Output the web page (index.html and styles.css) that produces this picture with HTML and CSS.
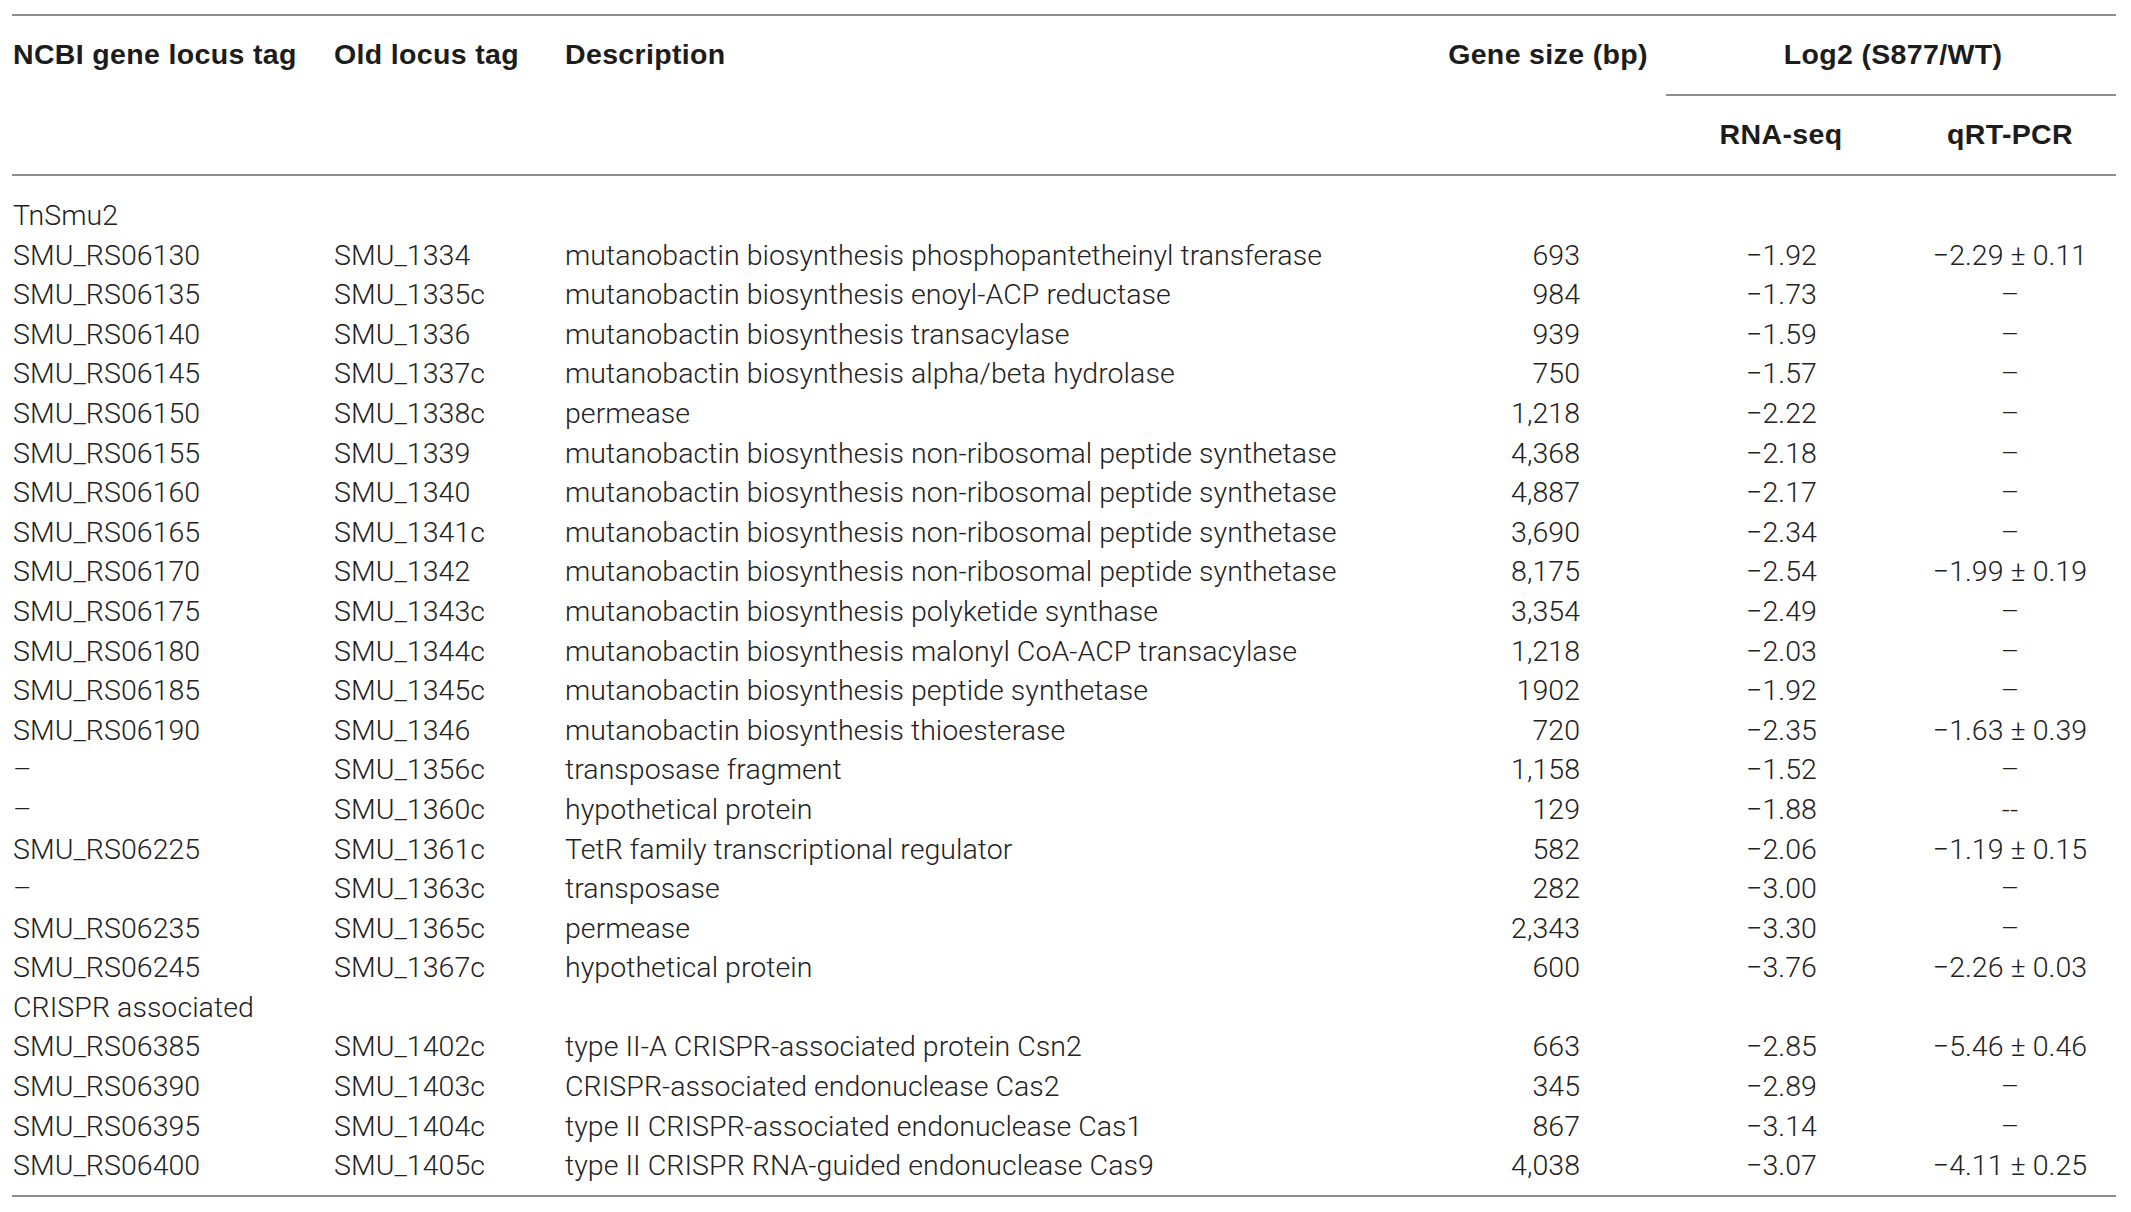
FILE: index.html
```html
<!DOCTYPE html>
<html lang="en">
<head>
<meta charset="utf-8">
<title>Table</title>
<link rel="stylesheet" href="styles.css">
</head>
<body>
<table class="tbl">
  <colgroup>
    <col class="c-ncbi">
    <col class="c-old">
    <col class="c-desc">
    <col class="c-size">
    <col class="c-rna">
    <col class="c-qrt">
  </colgroup>
  <thead>
    <tr class="head-top">
      <th rowspan="2" class="h-left">NCBI gene locus tag</th>
      <th rowspan="2" class="h-left">Old locus tag</th>
      <th rowspan="2" class="h-left">Description</th>
      <th rowspan="2" class="h-center">Gene size (bp)</th>
      <th colspan="2" class="h-group">Log2 (S877/WT)</th>
    </tr>
    <tr class="head-sub">
      <th class="h-sub">RNA-seq</th>
      <th class="h-sub h-qrt">qRT-PCR</th>
    </tr>
  </thead>
  <tbody>
    <tr class="section first"><td colspan="6">TnSmu2</td></tr>
    <tr><td>SMU_RS06130</td><td>SMU_1334</td><td>mutanobactin biosynthesis phosphopantetheinyl transferase</td><td class="num">693</td><td class="ctr">−1.92</td><td class="ctr qrt">−2.29 ± 0.11</td></tr>
    <tr><td>SMU_RS06135</td><td>SMU_1335c</td><td>mutanobactin biosynthesis enoyl-ACP reductase</td><td class="num">984</td><td class="ctr">−1.73</td><td class="ctr qrt">–</td></tr>
    <tr><td>SMU_RS06140</td><td>SMU_1336</td><td>mutanobactin biosynthesis transacylase</td><td class="num">939</td><td class="ctr">−1.59</td><td class="ctr qrt">–</td></tr>
    <tr><td>SMU_RS06145</td><td>SMU_1337c</td><td>mutanobactin biosynthesis alpha/beta hydrolase</td><td class="num">750</td><td class="ctr">−1.57</td><td class="ctr qrt">–</td></tr>
    <tr><td>SMU_RS06150</td><td>SMU_1338c</td><td>permease</td><td class="num">1,218</td><td class="ctr">−2.22</td><td class="ctr qrt">–</td></tr>
    <tr><td>SMU_RS06155</td><td>SMU_1339</td><td>mutanobactin biosynthesis non-ribosomal peptide synthetase</td><td class="num">4,368</td><td class="ctr">−2.18</td><td class="ctr qrt">–</td></tr>
    <tr><td>SMU_RS06160</td><td>SMU_1340</td><td>mutanobactin biosynthesis non-ribosomal peptide synthetase</td><td class="num">4,887</td><td class="ctr">−2.17</td><td class="ctr qrt">–</td></tr>
    <tr><td>SMU_RS06165</td><td>SMU_1341c</td><td>mutanobactin biosynthesis non-ribosomal peptide synthetase</td><td class="num">3,690</td><td class="ctr">−2.34</td><td class="ctr qrt">–</td></tr>
    <tr><td>SMU_RS06170</td><td>SMU_1342</td><td>mutanobactin biosynthesis non-ribosomal peptide synthetase</td><td class="num">8,175</td><td class="ctr">−2.54</td><td class="ctr qrt">−1.99 ± 0.19</td></tr>
    <tr><td>SMU_RS06175</td><td>SMU_1343c</td><td>mutanobactin biosynthesis polyketide synthase</td><td class="num">3,354</td><td class="ctr">−2.49</td><td class="ctr qrt">–</td></tr>
    <tr><td>SMU_RS06180</td><td>SMU_1344c</td><td>mutanobactin biosynthesis malonyl CoA-ACP transacylase</td><td class="num">1,218</td><td class="ctr">−2.03</td><td class="ctr qrt">–</td></tr>
    <tr><td>SMU_RS06185</td><td>SMU_1345c</td><td>mutanobactin biosynthesis peptide synthetase</td><td class="num">1902</td><td class="ctr">−1.92</td><td class="ctr qrt">–</td></tr>
    <tr><td>SMU_RS06190</td><td>SMU_1346</td><td>mutanobactin biosynthesis thioesterase</td><td class="num">720</td><td class="ctr">−2.35</td><td class="ctr qrt">−1.63 ± 0.39</td></tr>
    <tr><td>–</td><td>SMU_1356c</td><td>transposase fragment</td><td class="num">1,158</td><td class="ctr">−1.52</td><td class="ctr qrt">–</td></tr>
    <tr><td>–</td><td>SMU_1360c</td><td>hypothetical protein</td><td class="num">129</td><td class="ctr">−1.88</td><td class="ctr qrt">--</td></tr>
    <tr><td>SMU_RS06225</td><td>SMU_1361c</td><td>TetR family transcriptional regulator</td><td class="num">582</td><td class="ctr">−2.06</td><td class="ctr qrt">−1.19 ± 0.15</td></tr>
    <tr><td>–</td><td>SMU_1363c</td><td>transposase</td><td class="num">282</td><td class="ctr">−3.00</td><td class="ctr qrt">–</td></tr>
    <tr><td>SMU_RS06235</td><td>SMU_1365c</td><td>permease</td><td class="num">2,343</td><td class="ctr">−3.30</td><td class="ctr qrt">–</td></tr>
    <tr><td>SMU_RS06245</td><td>SMU_1367c</td><td>hypothetical protein</td><td class="num">600</td><td class="ctr">−3.76</td><td class="ctr qrt">−2.26 ± 0.03</td></tr>
    <tr class="section"><td colspan="6">CRISPR associated</td></tr>
    <tr><td>SMU_RS06385</td><td>SMU_1402c</td><td>type II-A CRISPR-associated protein Csn2</td><td class="num">663</td><td class="ctr">−2.85</td><td class="ctr qrt">−5.46 ± 0.46</td></tr>
    <tr><td>SMU_RS06390</td><td>SMU_1403c</td><td>CRISPR-associated endonuclease Cas2</td><td class="num">345</td><td class="ctr">−2.89</td><td class="ctr qrt">–</td></tr>
    <tr><td>SMU_RS06395</td><td>SMU_1404c</td><td>type II CRISPR-associated endonuclease Cas1</td><td class="num">867</td><td class="ctr">−3.14</td><td class="ctr qrt">–</td></tr>
    <tr class="last"><td>SMU_RS06400</td><td>SMU_1405c</td><td>type II CRISPR RNA-guided endonuclease Cas9</td><td class="num">4,038</td><td class="ctr">−3.07</td><td class="ctr qrt">−4.11 ± 0.25</td></tr>
  </tbody>
</table>
</body>
</html>
```
FILE: styles.css
```css
html, body {
  margin: 0;
  padding: 0;
  background: #ffffff;
}

.tbl {
  margin: 14px 0 0 12px;
  width: 2104px;
  table-layout: fixed;
  border-collapse: collapse;
  font-family: Roboto, "Liberation Sans", Arial, sans-serif;
  font-weight: 300;
  font-size: 28.5px;
  letter-spacing: 0.05px;
  line-height: 39.6px;
  color: #222222;
}

.c-ncbi { width: 321px; }
.c-old { width: 231px; }
.c-desc { width: 866px; }
.c-size { width: 236px; }
.c-rna { width: 230px; }
.c-qrt { width: 220px; }

.tbl th {
  font-family: "Liberation Sans", Arial, sans-serif;
  font-weight: 700;
  font-size: 28.5px;
  letter-spacing: 0.35px;
  line-height: 40px;
  color: #1c1c1c;
  padding: 0;
  white-space: nowrap;
}

.tbl .head-top th {
  border-top: 2px solid #8e8e8e;
  padding-top: 18px;
  padding-bottom: 20px;
  vertical-align: top;
}

.tbl .h-left {
  text-align: left;
  padding-left: 1px;
  border-bottom: 2px solid #8e8e8e;
}

.tbl .h-center {
  text-align: center;
  border-bottom: 2px solid #8e8e8e;
}

.tbl .h-group {
  text-align: center;
  padding-left: 4px;
  border-bottom: 2px solid #8e8e8e;
}

.tbl .h-sub {
  text-align: center;
  vertical-align: top;
  padding-top: 18px;
  padding-bottom: 20px;
  border-bottom: 2px solid #8e8e8e;
}

.tbl .h-qrt {
  padding-left: 8px;
}

.tbl td {
  padding: 0 0 0 1px;
  white-space: nowrap;
  vertical-align: top;
}

.tbl tr.first td {
  padding-top: 20px;
}

.tbl tr.last td {
  padding-bottom: 9px;
  border-bottom: 2px solid #8e8e8e;
}

.tbl td.num {
  text-align: right;
  padding-right: 86px;
}

.tbl td.ctr {
  text-align: center;
}

.tbl td.qrt {
  padding-left: 8px;
}
```
